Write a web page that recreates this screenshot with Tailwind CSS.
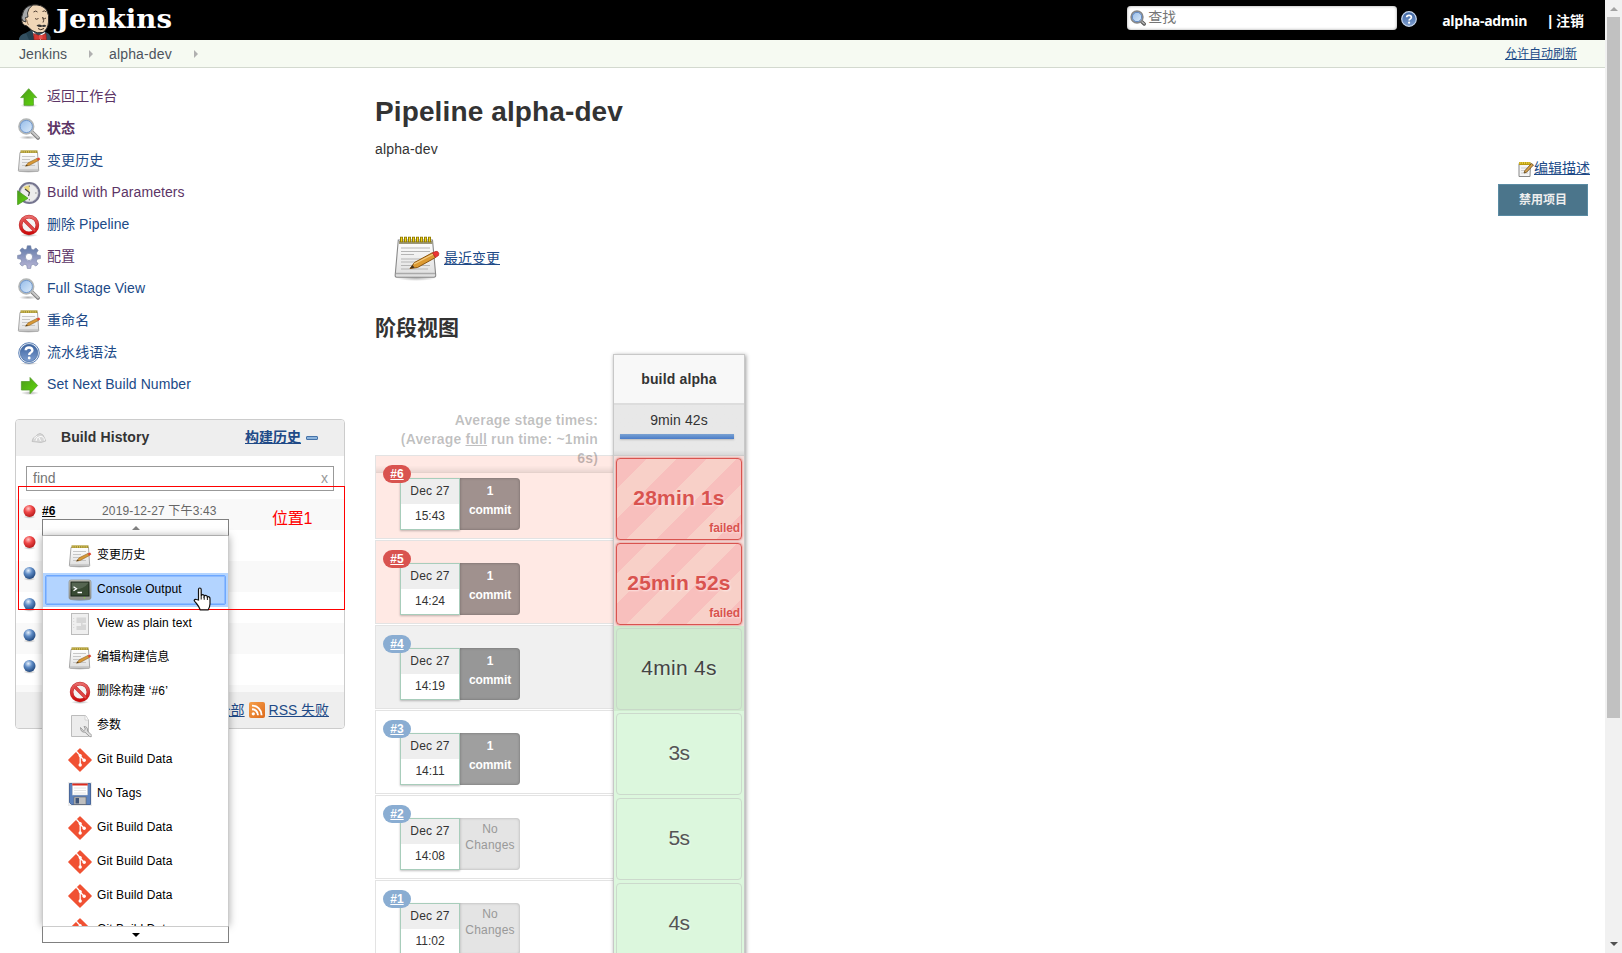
<!DOCTYPE html>
<html lang="zh-CN">
<head>
<meta charset="utf-8">
<title>alpha-dev [Jenkins]</title>
<script src="https://cdn.jsdelivr.net/npm/@tailwindcss/browser@4"></script>
</head>
<body class="h-[953px] w-[1622px] overflow-hidden bg-white font-['Liberation_Sans','Noto_Sans_CJK_SC',sans-serif] text-sm text-[#333]">

<svg width="0" height="0" class="absolute">
  <defs>
    <linearGradient id="g-green" x1="0" y1="0" x2="1" y2="1"><stop offset="0" stop-color="#4c9a1c"/><stop offset="1" stop-color="#5fd80a"/></linearGradient>
    <linearGradient id="g-red" x1="0" y1="0" x2="0" y2="1"><stop offset="0" stop-color="#e86a6a"/><stop offset="1" stop-color="#cc0b0b"/></linearGradient>
    <linearGradient id="g-gear" x1="0" y1="0" x2="0" y2="1"><stop offset="0" stop-color="#6079a8"/><stop offset="1" stop-color="#b9b6d6"/></linearGradient>
    <linearGradient id="g-paper" x1="0" y1="0" x2="0" y2="1"><stop offset="0" stop-color="#ffffff"/><stop offset="1" stop-color="#dedede"/></linearGradient>
    <linearGradient id="g-help" x1="0" y1="0" x2="0" y2="1"><stop offset="0" stop-color="#3a62a0"/><stop offset="1" stop-color="#7f9fcf"/></linearGradient>
    <linearGradient id="g-rss" x1="0" y1="0" x2="1" y2="1"><stop offset="0" stop-color="#f6a04a"/><stop offset="1" stop-color="#dd6a1c"/></linearGradient>
    <linearGradient id="g-lens" x1="0" y1="0" x2="1" y2="1"><stop offset="0" stop-color="#8fb8e8"/><stop offset="1" stop-color="#e2effb"/></linearGradient>
    <linearGradient id="g-ok" x1="0" y1="0" x2="0" y2="1"><stop offset="0" stop-color="#c9c9c0"/><stop offset="1" stop-color="#8d8e88"/></linearGradient>
    <radialGradient id="g-ballred" cx=".4" cy=".3" r=".7"><stop offset="0" stop-color="#ffc4c4"/><stop offset=".45" stop-color="#f04848"/><stop offset="1" stop-color="#b81c1c"/></radialGradient>
    <radialGradient id="g-ballblue" cx=".4" cy=".3" r=".7"><stop offset="0" stop-color="#e6f0fb"/><stop offset=".45" stop-color="#5f8cc6"/><stop offset="1" stop-color="#234a80"/></radialGradient>
    <radialGradient id="g-shadow"><stop offset="0" stop-color="#000" stop-opacity=".3"/><stop offset="1" stop-color="#000" stop-opacity="0"/></radialGradient>
  </defs>
  <symbol id="up" viewBox="0 0 24 24"><ellipse cx="12" cy="20.5" rx="9" ry="2" fill="url(#g-shadow)"/><path d="M11.700 3.700 19.700 12.600H16.400V20.300H7V12.600H3.700Z" fill="url(#g-green)" stroke="#56a02c" stroke-width=".8" stroke-linejoin="round"/></symbol>
  <symbol id="right" viewBox="0 0 24 24"><ellipse cx="13" cy="20" rx="9" ry="2" fill="url(#g-shadow)"/><path d="M20.6 12.500 13 4.500V8.500H4.400V17H13V20.700Z" fill="url(#g-green)" stroke="#56a02c" stroke-width=".8" stroke-linejoin="round"/></symbol>
  <symbol id="search" viewBox="0 0 24 24"><ellipse cx="11" cy="20.5" rx="9" ry="2" fill="url(#g-shadow)"/><path d="M15 15 21 21" stroke="#808080" stroke-width="3.800" stroke-linecap="round"/><path d="M15 14.700 21 20.500" stroke="#c8c8c8" stroke-width="2" stroke-linecap="round"/><circle cx="9.300" cy="9.500" r="7.200" fill="url(#g-lens)" stroke="#b3b6b6" stroke-width="1.900"/><circle cx="9.300" cy="9.500" r="6.100" fill="none" stroke="#6c94cc" stroke-width=".9"/></symbol>
  <symbol id="search-s" viewBox="0 0 16 16"><path d="M11 11 14.200 14" stroke="#555" stroke-width="3.400" stroke-linecap="round"/><path d="M11 11 14.200 13.800" stroke="#bbb" stroke-width="1.400" stroke-linecap="round"/><circle cx="7" cy="7" r="5.900" fill="url(#g-lens)" stroke="#888" stroke-width="1.600"/><circle cx="7" cy="7" r="4.700" fill="none" stroke="#5c86c2"/></symbol>
  <symbol id="note" viewBox="0 0 48 48"><ellipse cx="23" cy="44" rx="20" ry="3" fill="url(#g-shadow)"/><path d="M5.3 6H39.5L42.7 41Q42.8 43.2 41 43.2H3.6Q2 43.2 2.2 41Z" fill="url(#g-paper)" stroke="#888" stroke-width="1.1"/><path d="M3 39.5H42" stroke="#aaa" stroke-width="1.6"/><path d="M6 8.5H39.5" stroke="#9b9778" stroke-width="3"/><path d="M7 5.5H39" stroke="#8f7a00" stroke-width="5.6" stroke-dasharray="3 1"/><path d="M8 5.5H38.5" stroke="#f0d520" stroke-width="4" stroke-dasharray="1.1 2.9"/><path d="M8 14H37M8 17.5H37M8 20.5H21M8 25H34M8 28H30M8 31.500H37M8 35H35" stroke="#b5b5b5" stroke-width="1"/><path d="M17 34.500 21.500 28.500 39.500 18.700 42.500 23.500 24.500 33.500Z" fill="#dc9a32" stroke="#8a5511" stroke-width="1"/><path d="M21 30 40.500 20" stroke="#f4cc82" stroke-width="1.3"/><path d="M17 34.500 19.600 31 21.500 33.800Z" fill="#443322"/><path d="M39.500 18.800 43 17.300Q45.500 17.200 45.800 19.500L45.500 21.500 42.500 23.500Z" fill="#ed3434" stroke="#b52a20" stroke-width=".7"/></symbol>
  <symbol id="note-m" viewBox="0 0 24 24"><ellipse cx="11.500" cy="22.500" rx="10" ry="1.500" fill="url(#g-shadow)"/><path d="M3 3.500H20.500L21.700 21.500Q21.700 22.300 21 22.300H2.200Q1.300 22.300 1.400 21.500Z" fill="url(#g-paper)" stroke="#9d9d9d" stroke-width=".9"/><path d="M2 21H21" stroke="#b5b5b5"/><path d="M3.500 2.700H20.500" stroke="#a08f35" stroke-width="2.600"/><path d="M4.500 2.600H20" stroke="#dcc85c" stroke-width="2.200" stroke-dasharray="1 1.200"/><path d="M5 7.500H18M5 10.500H13M5 13.500H15M5 16.500H18" stroke="#c2c2c2" stroke-width=".9"/><path d="M8.500 17.200 11.200 13.800 20 9.400 21.300 11.600 12.300 16.400Z" fill="#d99a38" stroke="#8d6224" stroke-width=".6"/><path d="M8.500 17.200 9.800 15.500 10.800 16.800Z" fill="#4b3718"/><path d="M19.900 9.400 22 8.400 23.300 10.300 21.300 11.700Z" fill="#e04430"/></symbol>
  <symbol id="note-s" viewBox="0 0 16 16"><path d="M1 2.500H12.500L12 15.500H1Z" fill="#f4f4f4" stroke="#888"/><path d="M3 7H9M3 9.500H7M3 12H10" stroke="#ccc"/><path d="M1 2.500H12.500" stroke="#b89a10" stroke-width="3"/><path d="M1.500 2H12.500" stroke="#f4dc50" stroke-width="1.500" stroke-dasharray="1.200 1"/><path d="M6 12 7 9.500 13.500 2.500 15.500 4 8.500 11.300Z" fill="#d8a14b" stroke="#5f4212" stroke-width=".8"/></symbol>
  <symbol id="clock" viewBox="0 0 24 24"><circle cx="12.300" cy="12" r="10" fill="#ececec" stroke="#75758f" stroke-width="2.200"/><circle cx="12.300" cy="12" r="8.700" fill="none" stroke="#c3c3cf" stroke-width=".7"/><path d="M12.500 12 6.500 6.500A8 8 0 0 1 12.500 4.500Z" fill="#ead77c"/><path d="M8 8 12.500 11.500 11.500 15" stroke="#444" stroke-width="1.100" fill="none"/><path d="M12.300 4.500V6M19.500 12H18.300M12.300 19.500V18" stroke="#777"/><path d="M.6 9.800 11 17.300.6 23.800Z" fill="url(#g-green)" stroke="#4a9a25" stroke-width=".8"/></symbol>
  <symbol id="stop" viewBox="0 0 24 24"><ellipse cx="12" cy="22.300" rx="9" ry="1.700" fill="url(#g-shadow)"/><circle cx="12" cy="12" r="8.400" fill="#f4f4f4" stroke="#c03030" stroke-width="3.600"/><path d="M6.500 6.500 17.500 17.500" stroke="#c83030" stroke-width="3.200"/><circle cx="12" cy="12" r="8.400" fill="none" stroke="url(#g-red)" stroke-width="2.600"/><path d="M6 6 18 18" stroke="#e04848" stroke-width="2"/></symbol>
  <symbol id="gear" viewBox="0 0 24 24"><g fill="url(#g-gear)" stroke="#7280a3" stroke-width=".6"><path fill-rule="evenodd" d="M10.300.800H13.700L14.300 4.100 16.200 4.900 19 3 21.200 5.300 19.400 8 20.100 9.900 23.400 10.500V13.600L20.100 14.300 19.300 16.200 21.200 19 18.900 21 16.200 19.300 14.300 20.100 13.700 23.400H10.300L9.700 20.100 7.800 19.300 5 21.100 2.800 18.800 4.700 16.200 3.900 14.200.600 13.600V10.400L3.900 9.800 4.700 7.900 2.900 5.200 5.200 3 7.900 4.800 9.700 4.100ZM12 8.300A3.600 3.600 0 1 0 12 15.500 3.600 3.600 0 1 0 12 8.300Z"/></g></symbol>
  <symbol id="help" viewBox="0 0 24 24"><ellipse cx="12" cy="22.500" rx="9" ry="1.500" fill="url(#g-shadow)"/><circle cx="12" cy="12" r="10.300" fill="#eef2f8" stroke="#5f83b8" stroke-width="1"/><circle cx="12" cy="12" r="8.700" fill="url(#g-help)" stroke="#40689f" stroke-width=".7"/><path d="M8.700 9.300Q8.800 6.500 12 6.500T15.400 9.300Q15.400 10.900 13.600 11.800 12.200 12.500 12.200 14" fill="none" stroke="#fff" stroke-width="2.400"/><circle cx="12.200" cy="17" r="1.400" fill="#fff"/></symbol>
  <symbol id="help-s" viewBox="0 0 16 16"><circle cx="8" cy="8" r="7.300" fill="url(#g-help)" stroke="#c9d8ee" stroke-width="1.200"/><path d="M5.700 6.300Q5.700 4.300 8 4.300T10.400 6.300Q10.400 7.300 9.200 7.900 8.100 8.400 8.100 9.600" fill="none" stroke="#fff" stroke-width="1.700"/><circle cx="8.100" cy="11.700" r="1.100" fill="#fff"/></symbol>
  <symbol id="term" viewBox="0 0 24 24"><ellipse cx="12" cy="22" rx="10" ry="1.500" fill="url(#g-shadow)"/><rect x="1" y="2" width="22" height="19.500" rx="2" fill="url(#g-ok)" stroke="#8b8c87" stroke-width=".7"/><rect x="3" y="4" width="18" height="14" fill="#384a33" stroke="#182418"/><path d="M3.500 11Q14 13 20.500 5V4.500H3.500Z" fill="#fff" opacity=".15"/><path d="M5.500 8.800 8.500 10.800 5.500 12.800M9.500 14.500H14" fill="none" stroke="#fff" stroke-width="1.300"/><circle cx="16.500" cy="19.700" r=".8" fill="#8c4"/></symbol>
  <symbol id="doc" viewBox="0 0 24 24"><rect x="3.500" y="1.500" width="17" height="21" fill="#efefef" stroke="#bcbcbc"/><path d="M8.500 5.500H18V11H14.500V12.500H18V18H8.500V14H13V11H8.500Z" fill="#d6d6d6"/><path d="M5.700 6V18" stroke="#d5d5d5" stroke-dasharray="1 2"/></symbol>
  <symbol id="param" viewBox="0 0 24 24"><path d="M3.500 1.500H17.500L20.500 6V22.500H3.500Z" fill="#ececec" stroke="#bcbcbc"/><path d="M17 1.500V6H20.500" fill="#fafafa" stroke="#ccc" stroke-width=".8"/><path d="M12.500 13.500Q12.500 18.500 17 18.200L21.500 22.500Q23.500 23.500 24 21.500L19.500 17Q20 12.500 16 12.500L17.500 15.200 15.500 16.800Z" fill="#dcdcdc" stroke="#8d8d8d" stroke-width=".8"/></symbol>
  <symbol id="git" viewBox="0 0 24 24"><path d="M12 .900 23.100 12 12 23.100.900 12Z" fill="#f05133" stroke="#f05133" stroke-width="1.400" stroke-linejoin="round"/><path d="M8.300 3.300 12.200 7.500V17M12.200 8 15.800 12" stroke="#fff" stroke-width="1.300" fill="none"/><circle cx="12.200" cy="7.600" r="1.600" fill="#fff"/><circle cx="12.200" cy="17" r="1.700" fill="#fff"/><circle cx="16.200" cy="12.300" r="1.700" fill="#fff"/></symbol>
  <symbol id="floppy" viewBox="0 0 24 24"><rect width="24" height="24" fill="#ececec"/><path d="M1.500 1.500H22.500V22.500H3.500L1.500 20.500Z" fill="#5c82bd" stroke="#4a689b"/><rect x="4.500" y="1.500" width="15" height="11.500" fill="#fff" stroke="#ccc" stroke-width=".5"/><path d="M4.300 2.500H19.700" stroke="#dd2a1e" stroke-width="2"/><path d="M6 6H18M6 8.500H18M6 11H18" stroke="#ddd" stroke-width=".8"/><rect x="6" y="15" width="12" height="7.300" fill="#bfbfbf" stroke="#666" stroke-width=".6"/><rect x="7.500" y="16" width="3.500" height="5.500" fill="#3f5578"/></symbol>
</svg>

<div class="flex h-full">
  <div class="flex h-full w-[1605px] flex-col">

    <header class="flex h-10 shrink-0 items-start bg-black text-white">
      <svg class="ml-[18px] h-10 w-[160px]" viewBox="0 0 160 40">
        <path d="M1 40Q1 34.500 8 33L14 30 26 31 31 34Q33 36 32.500 40Z" fill="#335061"/>
        <path d="M8 33 13 30 20 40H11Z" fill="#24404f"/>
        <path d="M14.500 31 20 36 27 32 25.500 40H17Z" fill="#fff"/>
        <path d="M4.500 14Q6 6.500 14.500 5 24 4 28.500 10 31.500 15 30.500 22 30 29 25 32.500 19 34 14 30.500L9 26Q3 25 4 19Z" fill="#f0d6b7" stroke="#2a2a2a" stroke-width="1"/>
        <path d="M4.300 15Q6 6 14.500 5.200 10 8.500 9.500 13L10 17 7.500 17.500 8 22 5 21Q2.500 18 4.300 15Z" fill="#a5a7a8" stroke="#2a2a2a" stroke-width=".9"/>
        <path d="M7 19Q9.500 19 9.500 23L10.500 25" stroke="#a07d5c" fill="none"/>
        <path d="M15.500 12Q18 10 19.500 12M24.500 11.500Q27 10 28 12M17 18.500Q18.500 20 20.500 18.500M25 18Q26.500 19.500 28 18M24.500 17Q26.500 21.500 25 22.500" stroke="#3c2d22" fill="none" stroke-width=".9"/>
        <path d="M18.500 25.500Q21 23.500 24 25.500 26.500 24 28.500 26 26 27.500 24 26.500 21.500 28 18.500 25.500Z" fill="#333"/>
        <path d="M20 28.500Q22.500 31 26 28.500" stroke="#3c2d22" fill="none"/>
        <path d="M15.500 33.500 21.500 35.500 22 40H16ZM28 33.500 23.500 35.500 23 40H28.500Z" fill="#d33833" stroke="#7c1e1b" stroke-width=".6"/>
        <rect x="21" y="35" width="3.500" height="4" fill="#e5534e"/>
        <text x="38" y="28" textLength="116" lengthAdjust="spacingAndGlyphs" fill="#fff" font-family="DejaVu Serif" font-weight="bold" font-size="26">Jenkins</text>
      </svg>
      <div class="mt-[6px] ml-auto flex h-6 w-[270px] items-center rounded-[4px] bg-white pl-[3px] shadow-[inset_0_0_3px_#999]">
        <svg class="size-4"><use href="#search-s"/></svg>
        <span class="ml-[2px] -translate-y-px text-[14px] leading-6 text-[#757575]">查找</span>
      </div>
      <svg class="mt-[11px] ml-1 size-4"><use href="#help-s"/></svg>
      <a class="mt-[11px] ml-[25px] w-[85px] text-[14px] leading-5 font-bold whitespace-nowrap font-['Open_Sans','Noto_Sans_CJK_SC',sans-serif] tracking-[-0.3px]">alpha-admin</a>
      <span class="mt-[11px] mr-[21px] ml-[21px] text-[14px] leading-5 font-bold whitespace-nowrap">| 注销</span>
    </header>

    <nav class="flex h-7 shrink-0 items-center border-b border-[#d3d9cf] bg-[#f6faf2] pl-[19px] text-[#4d545d]">
      <a class="w-[70px] tracking-[0.1px]">Jenkins</a>
      <span class="h-0 w-[20px]"><i class="-mt-1 block size-0 border-y-4 border-l-4 border-y-transparent border-l-[#b0b0b0]"></i></span>
      <a class="w-[85px] tracking-[0.15px]">alpha-dev</a>
      <span class="h-0"><i class="-mt-1 block size-0 border-y-4 border-l-4 border-y-transparent border-l-[#b0b0b0]"></i></span>
      <a class="mr-7 ml-auto text-xs text-[#204a87] underline">允许自动刷新</a>
    </nav>

    <div class="flex min-h-0 flex-1">
      <aside class="w-[375px] shrink-0 pt-3">
        <ul id="tasks" class="pl-[17px]"></ul>

        <section class="relative mt-[19px] ml-[15px] h-[310px] w-[330px] rounded-[4px] border border-[#ccc] bg-white">
          <div class="flex h-9 items-center rounded-t-[3px] bg-[#eee] pl-[15px] font-bold">
            <svg class="h-3 w-4" viewBox="0 0 16 12"><path d="M1 9.500Q1.500 5.500 4.500 4.500 6 2 9 1.500 12.500 2 13.500 6L14.800 9 10 10.500Z" fill="#d8d8d8" stroke="#bcbcbc" stroke-width=".8"/><path d="M5 9Q5 5 9 4.500T13.500 8.500M9.500 9 8 5.500M3 6.500 6 4" stroke="#fff" fill="none" stroke-width=".9"/></svg>
            <span class="ml-[14px] w-[184px] -translate-y-px tracking-[0.1px]">Build History</span>
            <a class="-translate-y-px text-[#204a87] underline">构建历史</a>
            <i class="ml-[5px] h-1 w-3 rounded-[1px] border border-[#4572a8] bg-[#8db4dc]"></i>
          </div>
          <div class="mx-[10px] mt-[10px] flex h-[25px] items-center justify-between border border-[#999] pr-[5px] pl-[6px] text-[#757575]">
            <span class="-translate-y-px">find</span><span class="-translate-y-px text-[#999]">x</span>
          </div>
          <ul id="builds" class="mt-2 h-[193px] overflow-hidden"></ul>
          <div class="flex h-9 items-center justify-end rounded-b-[3px] bg-[#eee] pr-[15px] text-[#204a87]">
            <a class="underline">RSS 全部</a>
            <svg class="mx-1 size-4" viewBox="0 0 16 16"><rect width="16" height="16" rx="2" fill="url(#g-rss)"/><circle cx="4.300" cy="11.800" r="1.600" fill="#fff"/><path d="M3 7.200A6 6 0 0 1 9 13.200M3 3.600A9.600 9.600 0 0 1 12.600 13.200" stroke="#fff" stroke-width="1.900" fill="none"/></svg>
            <a class="tracking-[-0.05px] underline">RSS 失败</a>
          </div>

          <div class="absolute top-[99px] left-[26px] z-10 w-[187px] text-xs text-black">
            <div class="flex h-[17px] items-center justify-center border border-b-[#ccc] border-[#808080] bg-white"><i class="size-0 border-x-4 border-b-4 border-x-transparent border-b-[#808080]"></i></div>
            <ul id="menu" class="h-[390px] overflow-hidden border-x border-[#ccc] bg-white pt-[3px] shadow-[0_0_8px_rgba(0,0,0,0.35)]"></ul>
            <div class="relative flex h-[17px] items-center justify-center border border-t-[#ccc] border-[#808080] bg-white"><i class="size-0 border-x-4 border-t-4 border-x-transparent border-t-black"></i></div>
          </div>

          <div class="absolute top-[66px] left-[2px] z-20 h-[124px] w-[327px] border border-[#f00]">
            <span class="absolute top-[20px] left-[253px] text-[16px] leading-6 tracking-[-0.3px] text-[#f00]">位置1</span>
          </div>
          <svg class="absolute top-[167px] left-[177px] z-30 h-6 w-[18px]" viewBox="0 0 18 24"><path d="M5.500 13V2.500Q5.500 1 6.800 1T8.200 2.500V9Q8.500 7.500 9.900 7.700T11.200 9.200Q12 8 13.200 8.500T14.400 10Q15.500 9.300 16.300 10T17 12V17Q16.800 20 15.200 22.800H7.200Q6 19.500 3.500 16.500 1 14 1.200 13.200 1.800 11.800 3.500 12.500Z" fill="#fff" stroke="#111" stroke-width="1.200"/><path d="M8.200 9V12.500M11.200 9.500V12.800M14.400 10V13" stroke="#111"/></svg>
        </section>
      </aside>

      <main class="relative min-w-0 flex-1">
        <h1 class="mt-[26px] text-[28px] leading-9 font-bold tracking-[0.12px]">Pipeline alpha-dev</h1>
        <div class="mt-[9px] leading-5 tracking-[0.15px]">alpha-dev</div>
        <div class="absolute top-[90px] right-[15px] flex flex-col items-end">
          <div class="flex h-5 items-center text-[#204a87]"><svg class="mt-px size-4"><use href="#note-s"/></svg><a class="underline">编辑描述</a></div>
          <button class="mt-[6px] mr-[2px] h-8 w-[90px] border border-[#5a8ba3] bg-[#4b758b] text-xs font-bold text-[#eee]">禁用项目</button>
        </div>
        <div class="mt-[75px] ml-[18px] flex items-center text-[#204a87]">
          <svg class="size-12"><use href="#note"/></svg><a class="ml-[3px] underline">最近变更</a>
        </div>
        <h2 class="mt-[30px] text-[21px] leading-8 font-bold">阶段视图</h2>

        <div class="mt-[10px] flex">
          <div class="relative w-[238px] pt-[101px]">
            <div class="absolute top-[57px] right-[15px] z-10 w-[200px] text-right leading-[19px] font-bold tracking-[0.15px] text-black/25">Average stage times:<br>(Average <span class="underline">full</span> run time: ~1min<br>6s)</div>
            <div id="runs"></div>
          </div>
          <div class="relative z-10 w-[132px] border border-[#c8c8c8] bg-[#f8f8f8] shadow-[1px_1px_4px_rgba(0,0,0,0.4)]">
            <div class="flex h-[50px] items-center justify-center border-b-2 border-[#ddd] font-bold tracking-[0.15px]">build alpha</div>
            <div class="h-[51px] border-b border-[#ccc] bg-linear-to-b from-[#e8e8e8] from-90% to-[#d8d8d8] px-[6px] pt-[5px] text-center">
              <div class="leading-5 tracking-[0.1px]">9min 42s</div>
              <div class="mt-[4px] h-[5px] w-[114px] bg-linear-to-b from-[#7ba2d2] to-[#4a7cc8] shadow-[0_1px_2px_#bbb]"></div>
            </div>
            <div id="stages"></div>
          </div>
        </div>
      </main>
    </div>
  </div>

  <div class="flex h-full w-[17px] flex-col items-center bg-[#f1f1f1]">
    <i class="mt-[7px] size-0 border-x-4 border-b-4 border-x-transparent border-b-[#a3a3a3]"></i>
    <div class="mt-[6px] mr-px h-[701px] w-[13px] bg-[#c1c1c1]"></div>
    <i class="mt-auto mb-[7px] size-0 border-x-4 border-t-4 border-x-transparent border-t-[#505050]"></i>
  </div>
</div>

<script>
const fill = (id, items) => { document.getElementById(id).innerHTML = items.join(''); };

fill('tasks', [
  ['up', '返回工作台', 'text-[#5c3566]'],
  ['search', '状态', 'font-bold text-[#5c3566]'],
  ['note-m', '变更历史', 'text-[#204a87]'],
  ['clock', 'Build with Parameters', 'text-[#5c3566]'],
  ['stop', '删除 Pipeline', 'text-[#204a87]'],
  ['gear', '配置', 'text-[#5c3566]'],
  ['search', 'Full Stage View', 'text-[#204a87]'],
  ['note-m', '重命名', 'text-[#204a87]'],
  ['help', '流水线语法', 'text-[#204a87]'],
  ['right', 'Set Next Build Number', 'text-[#204a87]'],
].map(([icon, label, tone]) => `<li class="flex h-8 items-center gap-[6px]"><svg class="mt-px size-6"><use href="#${icon}"/></svg><a class="tracking-[0.07px] ${tone}">${label}</a></li>`));

fill('builds', ['red', 'red', 'blue', 'blue', 'blue', 'blue', ''].map((color, i) =>
  `<li class="flex h-[31px] items-start pl-2 text-xs leading-6 odd:bg-[#f9f9f9]">
    ${color ? `<svg class="-ml-px mt-[5px] mr-px h-[15px] w-[13px]" viewBox="0 0 13 15"><ellipse cx="6.500" cy="13" rx="6" ry="1.800" fill="url(#g-shadow)"/><circle cx="6.500" cy="7" r="6" fill="url(#g-ball${color})"/></svg>` : ''}
    ${i === 0 ? '<a class="ml-[5px] w-[60px] font-bold text-black underline">#6</a><span class="tracking-[0.15px] text-[#666]">2019-12-27 下午3:43</span>' : ''}
  </li>`));

fill('menu', [
  ['note-m', '变更历史'], ['term', 'Console Output'], ['doc', 'View as plain text'], ['note-m', '编辑构建信息'],
  ['stop', '删除构建 ‘#6’'], ['param', '参数'], ['git', 'Git Build Data'], ['floppy', 'No Tags'],
  ['git', 'Git Build Data'], ['git', 'Git Build Data'], ['git', 'Git Build Data'], ['git', 'Git Build Data'],
].map(([icon, label], i) => `<li class="${i === 1 ? 'bg-[#b3d4ff] px-[2px] py-[2px]' : 'px-[2px] py-[2px]'}">
    <div class="${i === 1 ? 'flex h-[30px] items-center rounded-[2px] border border-[#6ea8fe] pl-[22px] shadow-[inset_0_0_0_1px_#8fbcff]' : 'flex h-[30px] items-center border border-transparent pl-[22px]'}">
      <svg class="size-6"><use href="#${icon}"/></svg><span class="ml-[5px] -translate-y-px tracking-[0.1px]">${label}</span>
    </div></li>`));

const runs = [
  [6, '15:43', true, 'failed', '28min 1s'],
  [5, '14:24', true, 'failed', '25min 52s'],
  [4, '14:19', true, 'hover', '4min 4s'],
  [3, '14:11', true, 'ok', '3s'],
  [2, '14:08', false, 'ok', '5s'],
  [1, '11:02', false, 'ok', '4s'],
];
const rowTone = { failed: 'bg-[#ffe9e4]', hover: 'bg-[#f0f0f0]', ok: 'bg-white' };
const commitTone = { failed: 'bg-[#a0918e]', hover: 'bg-[#979797]', ok: 'bg-[#9f9f9f]' };
fill('runs', runs.map(([n, time, commit, state]) =>
  `<div class="h-[85px] pb-px"><div class="relative h-full border border-r-0 border-[#e3e3e3] pt-[22px] pl-6 ${rowTone[state]}">
    ${n === 6 ? '<div class="absolute top-0 left-0 h-[17px] w-full border-b border-black/10 bg-linear-to-b from-transparent from-60% to-black/8"></div>' : ''}
    <a class="absolute top-[9px] left-[7px] z-10 flex h-[18px] w-7 items-center justify-center rounded-full text-xs font-bold text-white underline ${state === 'failed' ? 'bg-[#d9534f]' : 'bg-[#8aadd2]'}">#${n}</a>
    <div class="flex h-[52px] w-[120px] text-center text-xs">
      <div class="w-[60px] border border-[#a8cdbb] bg-white shadow-[0_1px_2px_rgba(0,0,0,0.25)]">
        <div class="h-[25px] bg-[#eee] leading-[25px] tracking-[0.25px]">Dec 27</div><div class="leading-[25px]">${time}</div>
      </div>
      ${commit
        ? `<div class="w-[60px] rounded-r-[4px] pt-[4px] leading-[19px] font-bold tracking-[-0.1px] text-white shadow-[inset_0_0_3px_rgba(0,0,0,0.3)] ${commitTone[state]}">1<br>commit</div>`
        : '<div class="w-[60px] rounded-r-[4px] bg-[#e4e4e4] pt-[3px] leading-4 tracking-[0.2px] text-[#999] shadow-[inset_0_0_3px_rgba(0,0,0,0.25)]">No<br>Changes</div>'}
    </div></div></div>`));

const cellTone = {
  failed: 'border-[#d9534f] bg-[repeating-linear-gradient(135deg,#f8bfbd_0_21.2px,#f8d0c8_21.2px_42.4px)] font-bold tracking-[0.2px] text-[#d9534f] shadow-[0_0_2px_#d9534f]',
  hover: 'border-[#c8d8c8] bg-[#d0ebcf] tracking-[0.3px] text-[#444]',
  ok: 'border-[#ccd9cc] bg-[#dcf7dd] tracking-[-0.5px] text-[#555]',
};
const gutter = { failed: 'bg-[#f3dedb]', hover: 'bg-[#d0ebcf]', ok: 'bg-[#dcf7dd]' };
fill('stages', runs.map(([, , , state, time]) =>
  `<div class="h-[85px] px-[2px] pt-[2px] pb-px ${gutter[state]}"><div class="relative flex h-full items-center justify-center rounded-[4px] border text-[21px] [text-shadow:1px_1px_2px_#fff8] ${cellTone[state]}"><span class="-translate-y-[1.5px]">${time}</span>
    ${state === 'failed' ? '<span class="absolute right-[1px] bottom-[3px] text-xs tracking-[-0.1px]">failed</span>' : ''}</div></div>`));
</script>
</body>
</html>
